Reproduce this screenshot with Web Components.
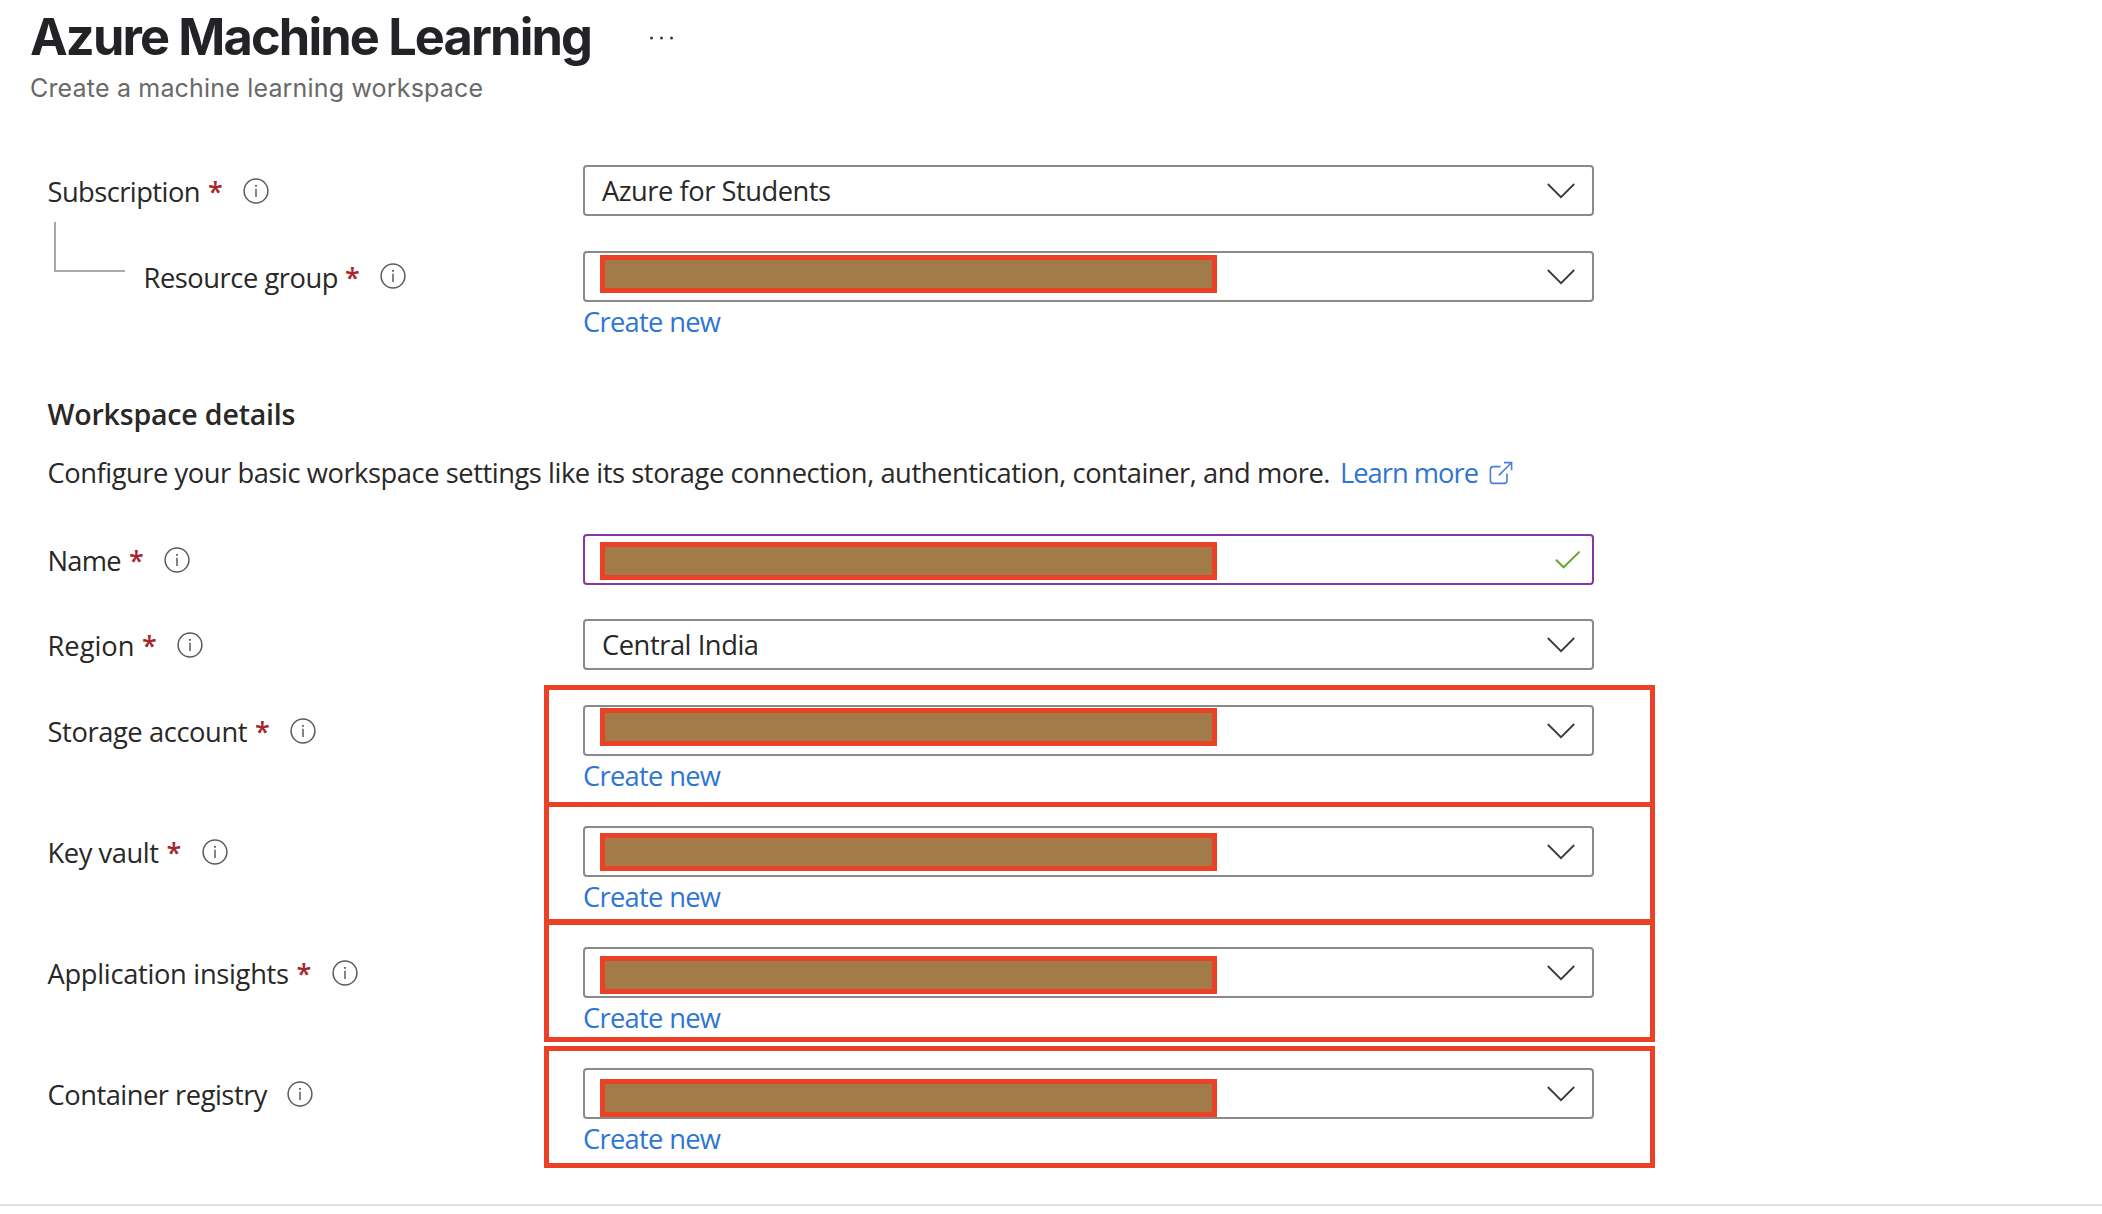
<!DOCTYPE html>
<html lang="en">
<head>
<meta charset="utf-8">
<title>Azure Machine Learning</title>
<style>
  html, body { margin: 0; background: #fff; }
  body { width: 2102px; height: 1214px; overflow: hidden; font-family: "Open Sans", "Noto Sans", sans-serif; font-size: 27.3px; color: #292827; }
</style>
</head>
<body>
<ml-create-page></ml-create-page>

<script>
const define = (name, html, setup) => {
  const template = document.createElement('template');
  template.innerHTML = html;
  customElements.define(name, class extends HTMLElement {
    connectedCallback() {
      if (this.shadowRoot) return;
      const root = this.attachShadow({ mode: 'open' });
      root.append(template.content.cloneNode(true));
      if (setup) setup(this, root);
    }
  });
};

/* Single line of text tracked to occupy the given width. */
define('fit-text', `
  <style>
    :host { display: inline-block; white-space: nowrap; flex: none; }
    span { display: inline-block; }
  </style>
  <span><slot></slot></span>`, (host, root) => {
  const width = parseFloat(host.getAttribute('w'));
  const span = root.querySelector('span');
  const natural = span.getBoundingClientRect().width;
  span.style.letterSpacing = (width - natural) / (host.textContent.length - 1) + 'px';
  host.style.width = width + 'px';
});

define('info-icon', `
  <style>:host { display: block; width: 26px; height: 26px; flex: none; } svg { display: block; }</style>
  <svg width="26" height="26" viewBox="0 0 26 26" fill="none" stroke="#5c5b5a">
    <circle cx="13" cy="13" r="11.9" stroke-width="1.5"/>
    <path d="M13 10.8V19" stroke-width="1.5"/>
    <path d="M13 6.9V8.7" stroke-width="1.8"/>
  </svg>`);

define('chevron-icon', `
  <style>:host { display: block; width: 30px; height: 18px; flex: none; } svg { display: block; }</style>
  <svg width="30" height="18" viewBox="0 0 30 18" fill="none" stroke="#3b3a39" stroke-width="1.8">
    <path d="M1.8 2L15 15.2L28.2 2"/>
  </svg>`);

define('check-icon', `
  <style>:host { display: block; width: 28px; height: 20px; flex: none; } svg { display: block; }</style>
  <svg width="28" height="20" viewBox="0 0 28 20" fill="none" stroke="#6aa52f" stroke-width="2">
    <path d="M2 9.8L9.6 17.3L25.6 1.6"/>
  </svg>`);

define('external-icon', `
  <style>:host { display: block; width: 24px; height: 24px; flex: none; } svg { display: block; }</style>
  <svg width="24" height="24" viewBox="0 0 24 24" fill="none" stroke="#4a7fdc" stroke-width="1.6">
    <path d="M11.5 5.6H4.2Q1.4 5.6 1.4 8.4V19.6Q1.4 22.4 4.2 22.4H15.2Q18 22.4 18 19.6V12.6"/>
    <path d="M15 1.6H22.6V9.2M22.4 1.8L9.8 14.4"/>
  </svg>`);

define('redaction-bar', `
  <style>
    :host { display: block; box-sizing: border-box; width: 617px; height: 38px; background: #a37b49; border: 5px solid #eb4126; }
  </style>`);

/* Bordered control: dropdown by default, or a validated text input. */
define('az-control', `
  <style>
    :host { display: flex; box-sizing: border-box; position: relative; width: 1011px; height: 51px; border: 2px solid #8a8a89; border-radius: 4px; align-items: center; justify-content: space-between; padding: 0 16px 0 17px; background: #fff; }
    :host([kind=input]) { border-color: #8238a5; padding-right: 10px; }
    .value { line-height: 48px; }
    redaction-bar { position: absolute; left: 15px; }
  </style>
  <div class="value"><slot></slot></div>`, (host, root) => {
  root.append(document.createElement(host.getAttribute('kind') === 'input' ? 'check-icon' : 'chevron-icon'));
  if (host.hasAttribute('bar')) {
    const bar = document.createElement('redaction-bar');
    bar.style.top = (host.getAttribute('bar') - 2) + 'px';
    root.append(bar);
  }
});

define('az-label', `
  <style>
    :host { display: flex; box-sizing: border-box; width: 583px; height: 53px; line-height: 54px; padding-left: 47.5px; align-items: center; flex: none; }
    :host([nested]) { padding-left: 54px; }
    .elbow { display: none; box-sizing: border-box; width: 71px; height: 50px; border: solid #aaa9a8; border-width: 0 0 2px 2px; margin: -61px 18.5px 0 0; }
    :host([nested]) .elbow { display: block; }
    .star { color: #a4262c; width: 13px; margin-left: 7.5px; font-weight: 600; font-size: 27px; }
    :host([nested]) .star { margin-left: 6.5px; }
    :host([optional]) .star { display: none; }
    info-icon { margin-left: 22px; margin-top: -1px; }
    :host([nested]) info-icon { margin-top: -3px; margin-left: 21.5px; }
    :host([optional]) info-icon { margin-left: 19px; }
  </style>
  <span class="elbow"></span><slot></slot><span class="star">*</span><info-icon></info-icon>`);

define('az-field', `
  <style>
    :host { display: flex; height: 86px; align-items: flex-start; }
    :host([tall]) { height: 121px; }
    .side { display: flex; flex-direction: column; position: relative; }
    .link { color: #2f76d2; line-height: 40px; height: 40px; }
    .frame { position: absolute; box-sizing: border-box; left: -39px; width: 1111px; border: 5px solid #eb4126; pointer-events: none; }
  </style>
  <slot name="label"></slot>
  <div class="side"><slot></slot></div>`, (host, root) => {
  const side = root.querySelector('.side');
  if (host.hasAttribute('create')) {
    const link = document.createElement('a');
    link.className = 'link';
    link.innerHTML = '<fit-text w="138">Create new</fit-text>';
    side.append(link);
  }
  if (host.hasAttribute('frame')) {
    const [top, height] = host.getAttribute('frame').split(' ');
    const frame = document.createElement('div');
    frame.className = 'frame';
    frame.style.top = top + 'px';
    frame.style.height = height + 'px';
    side.append(frame);
  }
});

define('page-heading', `
  <style>
    :host { display: block; box-sizing: border-box; height: 165px; padding-left: 30px; font-family: Inter, "Liberation Sans", sans-serif; }
    .top { display: flex; align-items: center; height: 74px; font-size: 50.5px; font-weight: 650; line-height: 74px; color: #222327; }
    svg { display: block; margin-left: 55px; }
    .sub { font-size: 25px; line-height: 28px; color: #69696a; }
  </style>
  <div class="top"><fit-text w="563">Azure Machine Learning</fit-text>
    <svg width="30" height="6" viewBox="0 0 30 6" fill="#3d3c3b"><circle cx="3.5" cy="4" r="1.5"/><circle cx="13.5" cy="4" r="1.5"/><circle cx="23.5" cy="4" r="1.5"/></svg>
  </div>
  <div class="sub"><fit-text w="453">Create a machine learning workspace</fit-text></div>`);

define('section-intro', `
  <style>
    :host { display: block; box-sizing: border-box; height: 197px; padding: 57px 0 0 47.5px; }
    .title { font-weight: 600; font-size: 28.5px; line-height: 40px; height: 40px; }
    .text { display: flex; align-items: center; height: 40px; line-height: 42px; margin-top: 19px; }
    .more { display: flex; align-items: center; color: #2f76d2; margin-left: 9.5px; }
    external-icon { margin: -1px 0 0 10px; }
  </style>
  <div class="title"><fit-text w="248">Workspace details</fit-text></div>
  <div class="text">
    <fit-text w="1283">Configure your basic workspace settings like its storage connection, authentication, container, and more.</fit-text>
    <a class="more"><fit-text w="139">Learn more</fit-text><external-icon></external-icon></a>
  </div>`);

define('ml-create-page', `
  <style>
    :host { display: flex; flex-direction: column; width: 2102px; height: 1214px; }
    .end { height: 2px; background: #e1e1e1; margin-top: 15px; }
  </style>
  <page-heading></page-heading>
  <az-field><az-label slot="label"><fit-text w="153">Subscription</fit-text></az-label>
    <az-control><fit-text w="229">Azure for Students</fit-text></az-control></az-field>
  <az-field create><az-label slot="label" nested><fit-text w="195">Resource group</fit-text></az-label>
    <az-control bar="4"></az-control></az-field>
  <section-intro></section-intro>
  <az-field style="height:85px"><az-label slot="label"><fit-text w="74">Name</fit-text></az-label>
    <az-control kind="input" bar="8"></az-control></az-field>
  <az-field><az-label slot="label"><fit-text w="87">Region</fit-text></az-label>
    <az-control><fit-text w="157">Central India</fit-text></az-control></az-field>
  <az-field tall create frame="-20 122"><az-label slot="label"><fit-text w="200">Storage account</fit-text></az-label>
    <az-control bar="3"></az-control></az-field>
  <az-field tall create frame="-24 123"><az-label slot="label"><fit-text w="111.5">Key vault</fit-text></az-label>
    <az-control bar="7"></az-control></az-field>
  <az-field tall create frame="-28 123"><az-label slot="label"><fit-text w="241.5">Application insights</fit-text></az-label>
    <az-control bar="9"></az-control></az-field>
  <az-field tall create frame="-22 122"><az-label slot="label" optional><fit-text w="220">Container registry</fit-text></az-label>
    <az-control bar="11"></az-control></az-field>
  <div class="end"></div>`);
</script>
</body>
</html>
